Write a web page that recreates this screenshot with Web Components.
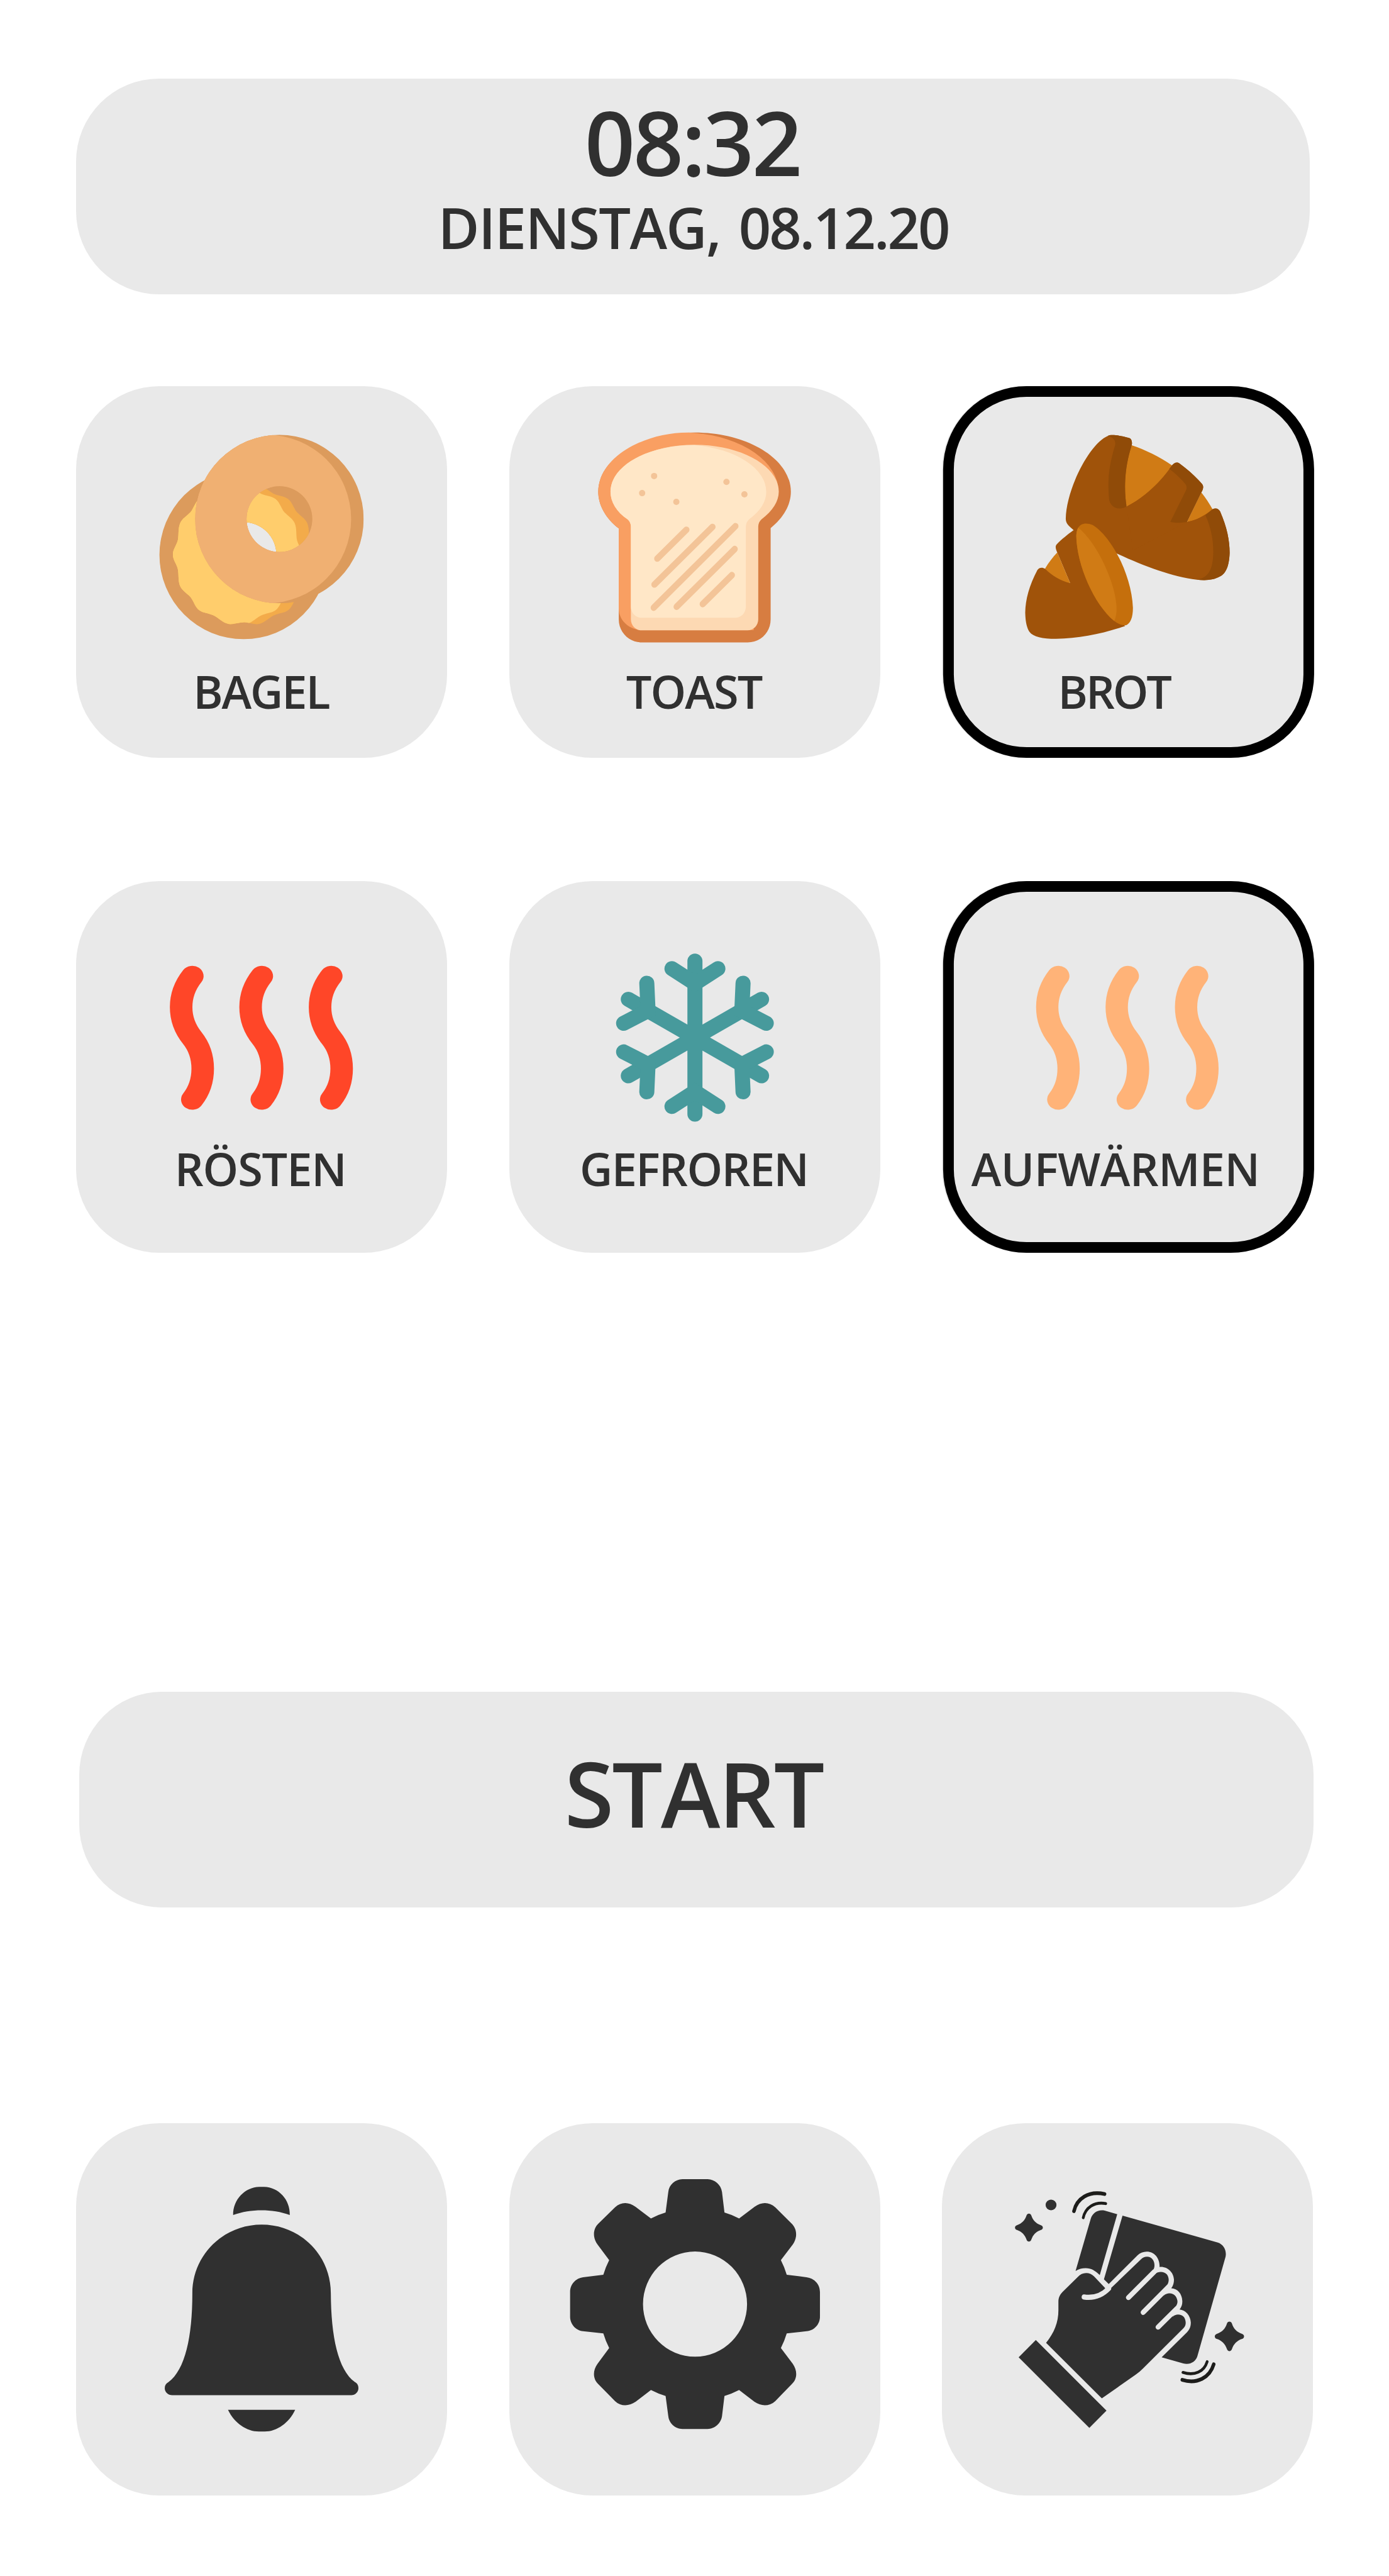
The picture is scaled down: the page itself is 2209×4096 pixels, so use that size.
<!DOCTYPE html>
<html lang="de">
<head>
<meta charset="utf-8">
<title>Toaster</title>
<style>
  html { --u: 0.63443px; background: #fff; }
  body { margin: 0; font-family: "Open Sans", "Noto Sans", sans-serif; font-weight: 600; color: #303030; }
</style>
</head>
<body>
<toaster-screen>
  <toaster-panel style="--left:191;--pad:47.4">
    <fit-text size="222" x="1281.6" ink="530">08:32</fit-text>
    <fit-text size="142" x="920.3 1665.3" ink="690 520.5" style="--before:32.5">DIENSTAG, 08.12.20</fit-text>
  </toaster-panel>

  <toaster-row style="--before:229.6">
    <toaster-tile icon="bagel"><fit-text size="113.5" line="123" x="303.8" ink="330.5">BAGEL</fit-text></toaster-tile>
    <toaster-tile icon="toast"><fit-text size="113.5" line="123" x="293.5" ink="343">TOAST</fit-text></toaster-tile>
    <toaster-tile icon="bread" selected><fit-text size="113.5" line="123" x="301.8" ink="275">BROT</fit-text></toaster-tile>
  </toaster-row>

  <toaster-row style="--before:308.4;--art:660">
    <toaster-tile icon="roast"><fit-text size="113.5" line="122" x="257.4" ink="412">RÖSTEN</fit-text></toaster-tile>
    <toaster-tile icon="frozen"><fit-text size="113.5" line="122" x="182.6" ink="561">GEFROREN</fit-text></toaster-tile>
    <toaster-tile icon="warm" selected><fit-text size="113.5" line="122" x="74" ink="714.5">AUFWÄRMEN</fit-text></toaster-tile>
  </toaster-row>

  <toaster-panel style="--before:1099.7;--left:199;--pad:141.4">
    <fit-text size="225" x="1226.6" ink="641">START</fit-text>
  </toaster-panel>

  <toaster-row style="--before:540.7">
    <toaster-tile icon="bell"></toaster-tile>
    <toaster-tile icon="gear"></toaster-tile>
    <toaster-tile icon="wipe"></toaster-tile>
  </toaster-row>
</toaster-screen>

<script>
const WAVY = 'M172,890 C172,925 195,950 205,985 C214,1025 205,1065 222,1105 C236,1135 265,1150 292,1178 C315,1208 322,1245 352,1268 C380,1288 415,1286 450,1303 C492,1325 515,1359 562,1362 C592,1362 620,1349 652,1349 C684,1349 712,1362 742,1362 C789,1359 812,1325 854,1303 C889,1286 924,1288 952,1268 C982,1245 989,1208 1012,1178 C1039,1150 1068,1135 1082,1105 C1099,1065 1090,1025 1099,985 C1109,950 1132,925 1132,890 C1132,855 1109,830 1099,795 C1090,755 1099,715 1082,675 C1068,645 1039,630 1012,602 C989,572 982,535 952,512 C924,492 889,494 854,477 C812,455 789,421 742,418 C712,418 684,431 652,431 C620,431 592,418 562,418 C515,421 492,455 450,477 C415,494 380,492 352,512 C322,535 315,572 292,602 C265,630 236,645 222,675 C205,715 214,755 205,795 C195,830 172,855 172,890Z';
const circle = (cx, cy, r) => `M${cx - r},${cy} a${r},${r} 0 1 0 ${2 * r},0 a${r},${r} 0 1 0 ${-2 * r},0Z`;
const steam = (color, xs) => `<g fill="none" stroke="${color}" stroke-width="83" stroke-linecap="round">${xs.map(x =>
  `<path transform="translate(${x},0) scale(1.1,1)" d="M0,414 C-55,490 -55,590 0,665 C51,735 51,843 0,914"/>`).join('')}</g>`;
const SPARK = 'M-15,-70 C-10,-85 10,-85 15,-70 C25,-42 43,-24 75,-14 C91,-9 91,9 75,14 C45,23 25,43 15,69 C10,85 -10,85 -15,69 C-25,43 -45,23 -75,14 C-91,9 -91,-9 -75,-14 C-43,-24 -25,-42 -15,-70Z';

/* Each icon: the transform of its drawing into the tile, and the drawing. */
const ICONS = {
  bagel: ['translate(179,93) scale(.3699)', `
    <clipPath id="cream"><path clip-rule="evenodd" d="${WAVY} ${circle(652, 892, 222)}"/></clipPath>
    <clipPath id="front"><path clip-rule="evenodd" d="${circle(894, 649, 571)} ${circle(894, 649, 223)}"/></clipPath>
    <path fill="#dc9b5c" fill-rule="evenodd" d="${circle(652, 892, 571)} ${circle(652, 892, 222)}"/>
    <g clip-path="url(#cream)">
      <rect width="1568" height="1568" fill="#f3ab4a"/>
      <rect width="652" height="1568" fill="#ffcd6c"/>
      <path transform="translate(-85,0)" fill="#ffcd6c" d="${WAVY}"/>
    </g>
    <g clip-path="url(#front)">
      <rect width="1568" height="1568" fill="#dc9b5c"/>
      <rect width="852" height="1568" fill="#f0b072"/>
      <circle cx="809" cy="649" r="571" fill="#f0b072"/>
    </g>`],
  toast: ['translate(184,83) scale(.35714,.37628)', `
    <path fill="#d77d41" d="M253,727 C160,660 109,570 109,482 C109,265 410,88 785,88 C1160,88 1461,265 1461,482 C1461,570 1410,655 1319,725 V1333 C1319,1420 1250,1486 1158,1486 H413 C325,1486 253,1420 253,1333Z"/>
    <path fill="#f99f62" d="M253,727 C160,660 109,570 109,482 C109,265 410,88 742,88 L785,91 A676,397 0 0 1 1375,485 H1200 V1405 H413 C325,1400 253,1340 253,1260Z"/>
    <path fill="#fdd9b3" d="M338,715 C338,697 330,680 316,668 C235,615 195,550 195,482 C195,310 460,170 785,170 C1110,170 1376,310 1376,482 C1376,545 1335,610 1255,666 C1240,678 1232,697 1232,715 V1333 A76,73 0 0 1 1156,1406 H413 A75,73 0 0 1 338,1333Z"/>
    <path fill="#ffe7c7" d="M338,715 C338,697 330,680 316,668 C235,615 195,550 195,482 C195,310 460,170 785,172 A591,315 0 0 1 1288,485 C1288,545 1250,610 1168,666 C1153,678 1145,697 1145,715 V1249 A75,73 0 0 1 1070,1322 H413 A75,73 0 0 1 338,1249Z"/>
    <g fill="#f3c498">
      <ellipse cx="501" cy="378" rx="22" ry="21"/><ellipse cx="417" cy="492" rx="22" ry="21"/><ellipse cx="657" cy="550" rx="22" ry="21"/>
      <ellipse cx="1009" cy="417" rx="22" ry="21"/><ellipse cx="1135" cy="500" rx="22" ry="21"/>
    </g>
    <path fill="none" stroke="#f3c498" stroke-width="43" stroke-linecap="round" d="M523,928 L728,736 M503,1101 L911,717 M498,1255 L1072,712 M659,1249 L1067,864 M842,1231 L1047,1038"/>`],
  bread: ['translate(-11,-17) scale(.61224)', `
    <path fill="#a0530a" d="M556,616 C535,598 525,590 525,570 C527,450 622,262 698,231 C705,226 740,226 785,240 C795,243 798,258 795,270 L774,521 L960,352 C968,342 980,336 990,344 C1025,370 1055,396 1083,428 C1090,437 1089,447 1080,463 L1021,584 L1126,532 C1138,526 1150,528 1157,541 C1185,605 1196,660 1196,710 C1194,770 1178,795 1158,806 C1130,822 1100,824 1061,820 C960,808 840,762 728,710 L640,800Z"/>
    <path fill="#d07b15" d="M795,270 C850,288 910,318 960,352 C920,415 850,482 774,521 C763,450 763,370 795,270Z M1080,463 C1098,486 1112,507 1126,532 C1092,560 1058,578 1021,584Z"/>
    <path fill="#904b08" d="M698,231 C705,226 740,226 785,240 C795,243 798,258 795,270 C765,360 763,455 774,521 C740,540 705,522 702,487 C697,420 698,365 727,270 C731,250 720,238 698,231Z"/>
    <path fill="#a0530a" d="M774,521 C850,482 915,418 960,352 L1040,430 L1021,584 L800,700Z"/>
    <path fill="#a0530a" d="M1021,584 C1058,578 1092,560 1126,532 L1130,700 L900,700Z"/>
    <path fill="#904b08" d="M960,352 C968,342 980,336 990,344 C1025,370 1055,396 1083,428 C1090,437 1089,447 1080,463 L1021,584 C1000,588 975,588 953,583 L1017,455 C1021,445 1021,438 1015,429 C995,405 975,386 949,366Z"/>
    <path fill="#904b08" d="M1097,556 L1126,532 C1138,526 1150,528 1157,541 C1185,605 1196,660 1196,710 C1194,770 1178,795 1158,806 C1130,822 1100,824 1061,820 C1110,812 1128,780 1129,705 C1129,650 1118,605 1097,556Z"/>
    <path fill="#a0530a" d="M556,618 C530,637 510,653 488,675 C482,682 482,690 490,709 L543,834 L440,775 C430,769 417,769 409,780 C375,845 360,900 359,955 C360,1000 368,1020 376,1033 C392,1055 430,1062 485,1062 C580,1062 680,1040 768,1010 L720,960 L600,620Z"/>
    <path fill="#d07b15" d="M490,709 C472,728 455,750 440,775 C470,805 505,825 543,834Z"/>
    <path fill="#c56f0c" d="M576,607 C585,592 605,584 635,596 C710,640 795,800 800,935 C800,975 790,997 773,1006 C760,1010 740,1002 723,989 C640,920 570,760 568,640 C569,625 571,615 576,607Z"/>
    <path fill="#d07b15" d="M576,607 C655,670 735,845 733,945 C732,965 729,978 723,989 C640,920 570,760 568,640 C569,625 571,615 576,607Z"/>`],
  roast: ['translate(-21,-18) scale(.61862)', steam('#ff4628', [505, 786.5, 1068])],
  warm: ['translate(-11,-18) scale(.61224,.61862)', steam('#ffb378', [494.5, 779, 1063])],
  frozen: ['translate(-16,-18) scale(.61862)', `
    <g fill="none" stroke="#479a9c" stroke-width="61" stroke-linecap="round">
      <path d="M778,353 V973 M508,508 L1048,818 M1048,508 L508,818"/>
      <path d="M685,384 L778,444 L871,384 M685,942 L778,882 L871,942"/>
      <path d="M583,443 L588,554 L489,605 M973,443 L968,554 L1067,605 M583,883 L588,772 L489,721 M973,883 L968,772 L1067,721"/>
    </g>`],
  bell: ['translate(-11,-22.3) scale(.61224,.61862)', `
    <g fill="#303030">
      <path d="M661,408 C660,345 710,295 768,294 H788 C846,295 895,345 893,408 C820,383 735,383 661,408Z"/>
      <path d="M778,447 C935,447 1061,570 1061,725 C1062,900 1090,1035 1160,1085 C1170,1090 1174,1098 1174,1110 C1174,1126 1160,1138 1145,1138 H412 C395,1138 381,1126 381,1110 C381,1098 386,1090 396,1085 C465,1035 494,900 494,725 C494,570 621,447 778,447Z"/>
      <path d="M640,1197 H915 C890,1250 840,1285 790,1285 H766 C716,1285 665,1250 640,1197Z"/>
    </g>`],
  gear: ['translate(-16,-22.3) scale(.61224,.61862)', `
    <path fill="#303030" fill-rule="evenodd" d="M666,398 L677,315 C680,285 705,264 735,263 H838 C867,264 893,285 897,315 L907,398 Q938,407 967,422 L1030,375 C1058,354 1090,354 1115,377 L1183,444 C1205,466 1206,500 1187,527 L1138,591 Q1153,620 1162,650 L1243,660 C1275,664 1298,688 1298,720 V820 C1298,850 1275,876 1243,879 L1162,888 Q1153,918 1138,947 L1187,1011 C1206,1038 1206,1072 1183,1093 L1115,1162 C1090,1184 1058,1184 1030,1165 L967,1117 Q938,1132 907,1141 L897,1223 C893,1252 867,1275 838,1275 H735 C705,1275 680,1252 677,1223 L666,1141 Q635,1132 606,1117 L543,1165 C515,1184 483,1184 459,1162 L390,1093 C368,1072 367,1038 387,1011 L435,947 Q420,918 411,888 L328,879 C298,875 275,850 275,820 V720 C275,688 298,664 328,660 L411,650 Q420,620 435,591 L387,527 C367,500 368,466 390,444 L459,377 C483,354 515,354 543,375 L606,422 Q635,407 666,398Z ${circle(786.5, 769, 213)}"/>`],
  wipe: ['translate(159,117.7) scale(.40179,.43367)', `
    <g fill="#303030">
      <path d="M438,583 L533,280 C545,245 580,226 620,234 L698,255 L589,606 C560,580 535,566 501,566 C478,566 458,571 438,583Z"/>
      <path d="M731,263 L1325,418 C1360,428 1382,462 1374,500 L1198,1075 C1187,1108 1150,1127 1110,1117 L975,1082 L1133,937 C1150,920 1157,905 1157,880 C1155,840 1125,808 1087,805 C1100,790 1105,775 1104,755 C1102,715 1075,685 1035,683 C1048,668 1052,650 1052,633 C1050,590 1010,555 962,560 C965,510 930,470 881,471 C860,471 840,479 825,492 L645,658 L615,631Z"/>
      <path d="M254,998 C305,940 331,880 331,810 V760 C331,735 342,717 360,701 L452,617 C480,588 525,588 553,614 L621,680 L634,704 L847,515 C868,494 905,494 922,520 C935,542 933,568 916,587 L935,600 C955,583 990,585 1008,603 C1024,625 1023,650 1003,671 L987,725 C1010,707 1040,707 1061,727 C1078,750 1078,770 1062,789 L1043,848 C1062,830 1095,830 1115,850 C1130,875 1128,897 1112,913 L860,1145 Q835,1168 815,1181 L602,1319Z"/>
      <path d="M190,982 L631,1390 L524,1490 L83,1082Z"/>
      <path transform="translate(147,332)" d="${SPARK}"/>
      <path transform="translate(1398,961) scale(1.05)" d="${SPARK}"/>
      <ellipse cx="285" cy="201" rx="34" ry="31"/>
    </g>
    <path fill="none" stroke="#e9e9e9" stroke-width="30" stroke-linecap="round" d="M491,733 C550,741 600,727 645,684 M768,736 L928,588 M860,822 L1018,675 M953,907 L1070,800"/>
    <g fill="none" stroke="#1c1c1a" stroke-linecap="round">
      <path stroke-width="22" d="M428,237 C445,165 520,117 619,138 M1104,1212 C1195,1238 1275,1200 1300,1122"/>
      <path stroke-width="17" d="M486,275 C500,215 555,182 626,193 M1108,1169 C1180,1190 1240,1165 1259,1107"/>
    </g>`],
};

class ToasterScreen extends HTMLElement {
  constructor() {
    super();
    this.attachShadow({ mode: 'open' }).innerHTML = `
      <style>
        :host { display: flex; flex-direction: column; align-items: flex-start; box-sizing: border-box;
          width: calc(3482 * var(--u)); height: calc(6456 * var(--u)); padding-top: calc(196.8 * var(--u)); overflow: hidden; }
      </style><slot></slot>`;
  }
}

class ToasterPanel extends HTMLElement {
  constructor() {
    super();
    this.attachShadow({ mode: 'open' }).innerHTML = `
      <style>
        :host { display: flex; flex-direction: column; box-sizing: border-box; background: #e9e9e9;
          width: calc(3093 * var(--u)); height: calc(540.7 * var(--u)); border-radius: calc(208 * var(--u));
          margin-left: calc(var(--left) * var(--u)); margin-top: calc(var(--before, 0) * var(--u));
          padding-top: calc(var(--pad) * var(--u)); }
        ::slotted(*) { --before: 0; }
      </style><slot></slot>`;
  }
}

class ToasterRow extends HTMLElement {
  constructor() {
    super();
    this.attachShadow({ mode: 'open' }).innerHTML = `
      <style>
        :host { display: flex; gap: calc(155 * var(--u)); margin-left: calc(191 * var(--u)); margin-top: calc(var(--before) * var(--u)); }
        ::slotted(*) { --before: 0; }
      </style><slot></slot>`;
  }
}

class ToasterTile extends HTMLElement {
  connectedCallback() {
    const [transform, art] = ICONS[this.getAttribute('icon')];
    const height = getComputedStyle(this).getPropertyValue('--art').trim() || '704.5';
    this.attachShadow({ mode: 'open' }).innerHTML = `
      <style>
        :host { display: flex; flex-direction: column; position: relative; background: #e9e9e9;
          width: calc(930 * var(--u)); height: calc(932.5 * var(--u)); border-radius: calc(209 * var(--u)); }
        svg { display: block; flex: none; overflow: visible; width: calc(930 * var(--u)); height: calc(${height} * var(--u)); }
        :host([selected])::after { content: ""; position: absolute; box-sizing: border-box; inset: 0;
          transform: translateX(calc(3 * var(--u))); border: calc(28 * var(--u)) solid #000; border-radius: inherit; }
      </style>
      <svg viewBox="0 0 930 ${height}" preserveAspectRatio="none"><g transform="${transform}">${art}</g></svg>
      <slot></slot>`;
  }
}

/* One line of text. Each word's ink starts at its x and is tracked to its ink width. */
class FitText extends HTMLElement {
  connectedCallback() {
    const nums = name => (this.getAttribute(name) || '').split(' ').map(Number);
    const [size] = nums('size'), line = nums('line')[0] || size, xs = nums('x'), inks = nums('ink');
    const pen = document.createElement('canvas').getContext('2d');
    pen.font = `600 ${size * 4}px "Open Sans", "Noto Sans", sans-serif`;
    const space = pen.measureText(' ').width / 4;
    let cursor = 0;
    const words = this.textContent.split(' ').map((word, i) => {
      const box = pen.measureText(word);
      const start = xs[i] + box.actualBoundingBoxLeft / 4;
      const ink = (box.actualBoundingBoxRight + box.actualBoundingBoxLeft) / 4;
      const track = (inks[i] - ink) / (word.length - 1);
      const before = start - cursor - (i ? space : 0);
      cursor = start + box.width / 4 + track * word.length;
      return `<span style="margin-left:calc(${before.toFixed(3)} * var(--u));letter-spacing:calc(${track.toFixed(3)} * var(--u))">${word}</span>`;
    });
    this.attachShadow({ mode: 'open' }).innerHTML = `
      <style>
        :host { display: block; white-space: nowrap; margin-top: calc(var(--before, 0) * var(--u));
          font-size: calc(${size} * var(--u)); line-height: calc(${line} * var(--u)); }
      </style><div>${words.join(' ')}</div>`;
  }
}

customElements.define('toaster-screen', ToasterScreen);
customElements.define('toaster-panel', ToasterPanel);
customElements.define('toaster-row', ToasterRow);
customElements.define('toaster-tile', ToasterTile);
customElements.define('fit-text', FitText);
</script>
</body>
</html>
